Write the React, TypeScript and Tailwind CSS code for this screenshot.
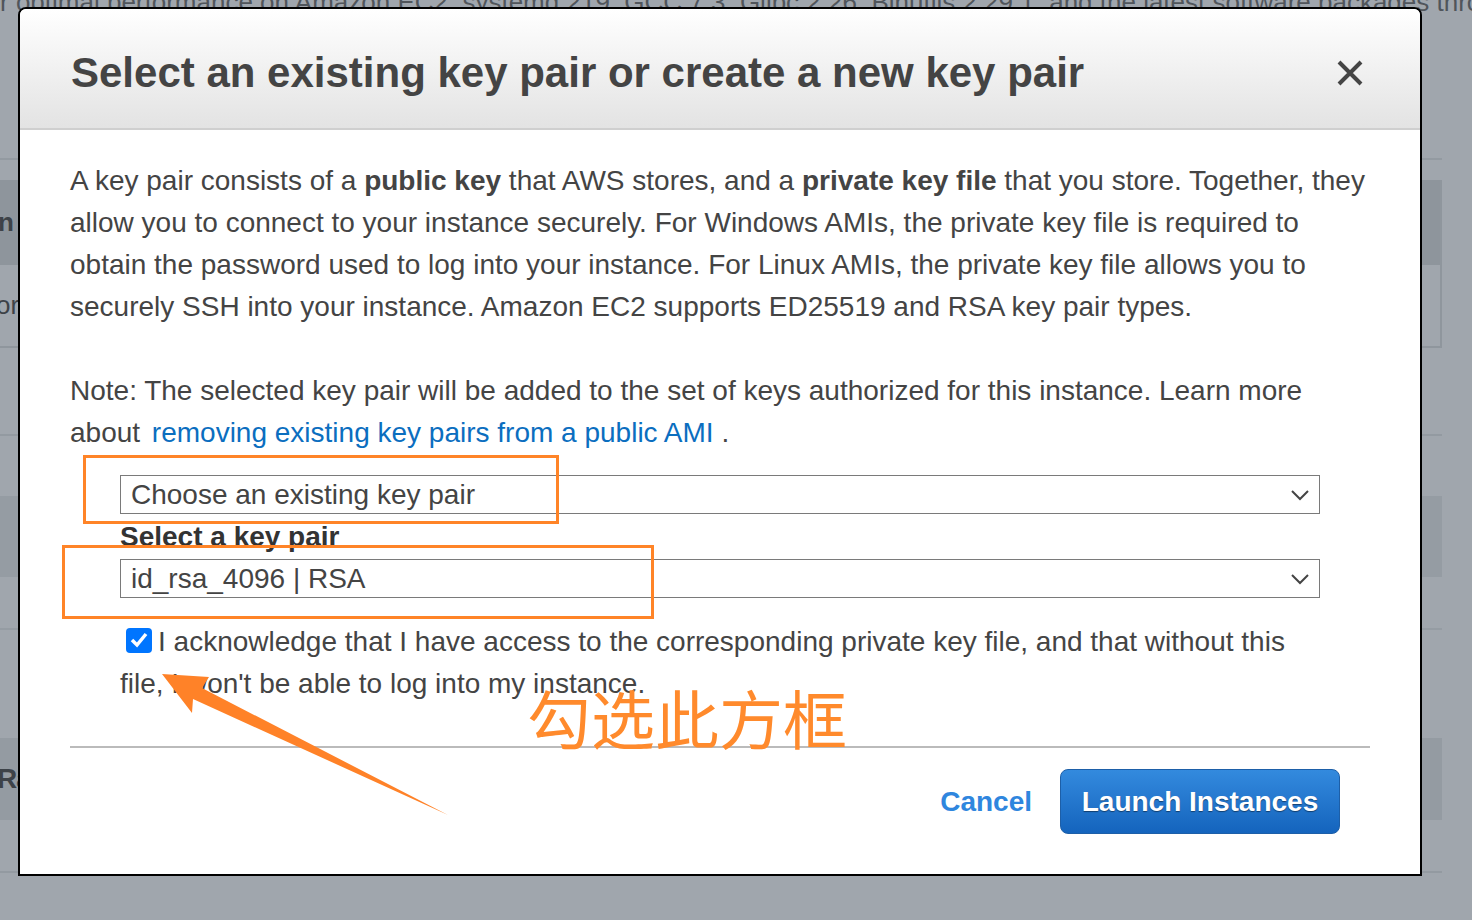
import React from "react";

const font = { fontFamily: '"Liberation Sans", Arial, "Noto Sans CJK SC", sans-serif' };

const Chevron = () => (
  <svg width="20" height="12" viewBox="0 0 20 12" className="shrink-0">
    <path d="M2 2 L10 10 L18 2" fill="none" stroke="#444" strokeWidth="2" />
  </svg>
);

const Select = ({ value }: { value: string }) => (
  <div className="flex h-[39px] items-center justify-between border border-[#7a7a7a] bg-white pl-[10px] pr-[9px] text-[28px] text-[#444]">
    <span>{value}</span>
    <Chevron />
  </div>
);

export default function App() {
  return (
    <div
      className="relative h-[920px] w-[1472px] overflow-hidden bg-[#a0a6ad] text-[#444]"
      style={font}
    >
      {/* page behind the overlay */}
      <div className="flex w-[1442px] flex-col">
        <div className="-mt-[12px] h-[20px] whitespace-nowrap text-[26px] leading-[28px] text-[#50555b]">
          r optimal performance on Amazon EC2, systemd 219, GCC 7.3, Glibc 2.26, Binutils 2.29.1, and the latest software packages through
        </div>
        <div className="h-[152px] border-b-2 border-[#939aa1]" />
        <div className="mt-[20px] flex h-[168px] flex-col border-r-2 border-b-2 border-[#8f969d]">
          <div className="flex h-[85px] items-center bg-[#8e959c] text-[26px] font-bold text-[#3d4248]">
            <span className="-ml-[2px]">n</span>
          </div>
          <div className="flex h-[81px] items-center text-[26px] text-[#3d4248]">
            <span className="-ml-[4px]">or</span>
          </div>
        </div>
        <div className="h-[88px] border-b-2 border-[#939aa1]" />
        <div className="mt-[60px] h-[81px] bg-[#959ca3]" />
        <div className="h-[53px] border-b-2 border-[#959ca3]" />
        <div className="mt-[108px] flex h-[82px] items-center bg-[#949ba2] text-[28px] font-bold text-[#3d4248]">
          <span className="-ml-[3px] tracking-[-1px]">Ra</span>
        </div>
        <div className="h-[53px] border-b-2 border-[#939aa1]" />
      </div>

      {/* modal */}
      <div className="absolute left-[18px] top-[7px] flex h-[869px] w-[1404px] flex-col overflow-hidden rounded-t-[8px] border-2 border-black bg-white">
        <div className="flex h-[121px] items-center justify-between border-b-2 border-[#cfcfcf] bg-gradient-to-b from-white to-[#e3e3e3] pl-[51px] pr-[56px] pt-[8px]">
          <h1 className="whitespace-nowrap text-[42px] font-bold text-[#444]">
            Select an existing key pair or create a new key pair
          </h1>
          <svg width="28" height="28" viewBox="0 0 28 28">
            <path d="M3 3 L25 25 M25 3 L3 25" stroke="#444" strokeWidth="4" />
          </svg>
        </div>

        <div className="flex flex-col whitespace-nowrap px-[50px] pt-[30px] text-[28px] leading-[42px] text-[#444]">
          <p>
            A key pair consists of a <b>public key</b> that AWS stores, and a <b>private key file</b> that you store. Together, they
            <br />
            allow you to connect to your instance securely. For Windows AMIs, the private key file is required to
            <br />
            obtain the password used to log into your instance. For Linux AMIs, the private key file allows you to
            <br />
            securely SSH into your instance. Amazon EC2 supports ED25519 and RSA key pair types.
          </p>
          <p className="mt-[42px]">
            Note: The selected key pair will be added to the set of keys authorized for this instance. Learn more
            <br />
            about <span className="ml-[4px] text-[#0b6ebf]">removing existing key pairs from a public AMI</span> .
          </p>

          <div className="mt-[21px] ml-[50px] mr-[50px] flex flex-col">
            <Select value="Choose an existing key pair" />
            <div className="text-[28px] font-bold leading-[45px] text-[#333]">Select a key pair</div>
            <Select value="id_rsa_4096 | RSA" />
            <div className="mt-[23px] leading-[42px]">
              <span className="ml-[6px] mr-[6px] inline-flex h-[25px] w-[26px] items-center justify-center rounded-[4px] bg-[#0075ff] align-[3px]">
                <svg width="18" height="16" viewBox="0 0 18 16">
                  <path d="M2 8 L7 13 L16 2" fill="none" stroke="white" strokeWidth="3.5" />
                </svg>
              </span>
              I acknowledge that I have access to the corresponding private key file, and that without this
              <br />
              file, I won't be able to log into my instance.
            </div>
          </div>

          <div className="mt-[41px] h-[2px] bg-[#bbbbbb]" />

          <div className="mt-[21px] flex items-center justify-end gap-[28px] pr-[30px]">
            <span className="text-[28px] font-bold text-[#2f86de]">Cancel</span>
            <button className="h-[65px] w-[280px] rounded-[8px] border border-[#1d5fa8] bg-gradient-to-b from-[#338ade] to-[#1464bd] text-[28px] font-bold text-white [text-shadow:0_1px_1px_rgba(0,0,0,0.45)]">
              Launch Instances
            </button>
          </div>
        </div>
      </div>

      {/* annotations */}
      <div className="absolute left-[83px] top-[455px] h-[69px] w-[476px] border-[3px] border-[#ff8427]" />
      <div className="absolute left-[62px] top-[545px] h-[74px] w-[592px] border-[3px] border-[#ff8427]" />
      <div
        className="absolute left-[527px] top-[676px] text-[64px] leading-[80px] text-[#ff8a2c]"
        style={{ fontFamily: '"Noto Sans CJK SC", sans-serif' }}
      >
        勾选此方框
      </div>
      <svg className="absolute left-0 top-0" width="1472" height="920">
        <polygon
          points="162,674 209,677 202,688 448,815 193,699 192,713"
          fill="#ff8228"
        />
      </svg>
    </div>
  );
}
